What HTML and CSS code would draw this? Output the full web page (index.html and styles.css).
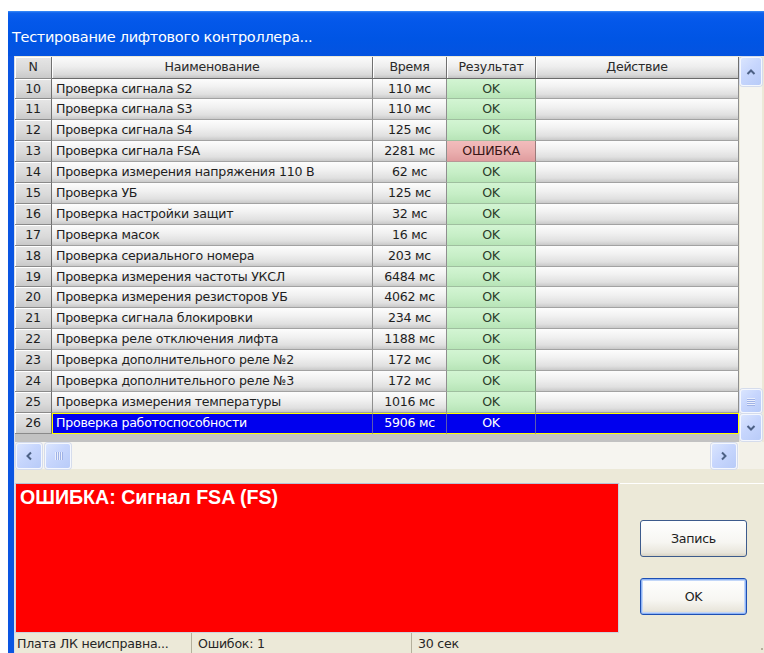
FILE: index.html
```html
<!DOCTYPE html>
<html lang="ru">
<head>
<meta charset="utf-8">
<title>Тестирование лифтового контроллера</title>
<link rel="stylesheet" href="styles.css">
</head>
<body>
<div class="window">
  <div class="caption">Тестирование лифтового контроллера...</div>
  <div class="client">
    <div class="grid-area">
      <div class="grid-top">
        <div class="cells">
          <div class="row head">
            <div class="c n">N</div>
            <div class="c">Наименование</div>
            <div class="c">Время</div>
            <div class="c">Результат</div>
            <div class="c">Действие</div>
          </div>
          <div class="row"><div class="c n">10</div><div class="c name">Проверка сигнала S2</div><div class="c time">110 мс</div><div class="c res ok">OK</div><div class="c act"></div></div>
          <div class="row"><div class="c n">11</div><div class="c name">Проверка сигнала S3</div><div class="c time">110 мс</div><div class="c res ok">OK</div><div class="c act"></div></div>
          <div class="row"><div class="c n">12</div><div class="c name">Проверка сигнала S4</div><div class="c time">125 мс</div><div class="c res ok">OK</div><div class="c act"></div></div>
          <div class="row"><div class="c n">13</div><div class="c name">Проверка сигнала FSA</div><div class="c time">2281 мс</div><div class="c res err">ОШИБКА</div><div class="c act"></div></div>
          <div class="row"><div class="c n">14</div><div class="c name">Проверка измерения напряжения 110 В</div><div class="c time">62 мс</div><div class="c res ok">OK</div><div class="c act"></div></div>
          <div class="row"><div class="c n">15</div><div class="c name">Проверка УБ</div><div class="c time">125 мс</div><div class="c res ok">OK</div><div class="c act"></div></div>
          <div class="row"><div class="c n">16</div><div class="c name">Проверка настройки защит</div><div class="c time">32 мс</div><div class="c res ok">OK</div><div class="c act"></div></div>
          <div class="row"><div class="c n">17</div><div class="c name">Проверка масок</div><div class="c time">16 мс</div><div class="c res ok">OK</div><div class="c act"></div></div>
          <div class="row"><div class="c n">18</div><div class="c name">Проверка сериального номера</div><div class="c time">203 мс</div><div class="c res ok">OK</div><div class="c act"></div></div>
          <div class="row"><div class="c n">19</div><div class="c name">Проверка измерения частоты УКСЛ</div><div class="c time">6484 мс</div><div class="c res ok">OK</div><div class="c act"></div></div>
          <div class="row"><div class="c n">20</div><div class="c name">Проверка измерения резисторов УБ</div><div class="c time">4062 мс</div><div class="c res ok">OK</div><div class="c act"></div></div>
          <div class="row"><div class="c n">21</div><div class="c name">Проверка сигнала блокировки</div><div class="c time">234 мс</div><div class="c res ok">OK</div><div class="c act"></div></div>
          <div class="row"><div class="c n">22</div><div class="c name">Проверка реле отключения лифта</div><div class="c time">1188 мс</div><div class="c res ok">OK</div><div class="c act"></div></div>
          <div class="row"><div class="c n">23</div><div class="c name">Проверка дополнительного реле №2</div><div class="c time">172 мс</div><div class="c res ok">OK</div><div class="c act"></div></div>
          <div class="row"><div class="c n">24</div><div class="c name">Проверка дополнительного реле №3</div><div class="c time">172 мс</div><div class="c res ok">OK</div><div class="c act"></div></div>
          <div class="row"><div class="c n">25</div><div class="c name">Проверка измерения температуры</div><div class="c time">1016 мс</div><div class="c res ok">OK</div><div class="c act"></div></div>
          <div class="row sel"><div class="c n">26</div><div class="c name">Проверка работоспособности</div><div class="c time">5906 мс</div><div class="c res ok">OK</div><div class="c act"></div></div>
        </div>
        <div class="vscroll">
          <div class="sbtn vbtn">
            <svg width="10" height="8" viewBox="0 0 10 8"><polyline points="1.5,6 5,2.5 8.5,6" fill="none" stroke="#4d6185" stroke-width="2"/></svg>
          </div>
          <div class="track"></div>
          <div class="sbtn vthumb">
            <svg width="8" height="9" viewBox="0 0 8 9"><path d="M0 1.5h8M0 3.5h8M0 5.5h8M0 7.5h8" stroke="#e9eefc" stroke-width="1"/><path d="M0 2.5h8M0 4.5h8M0 6.5h8M0 8.5h8" stroke="#9fb2e6" stroke-width="1"/></svg>
          </div>
          <div class="sbtn vbtn down">
            <svg width="10" height="8" viewBox="0 0 10 8"><polyline points="1.5,2 5,5.5 8.5,2" fill="none" stroke="#4d6185" stroke-width="2"/></svg>
          </div>
        </div>
      </div>
      <div class="hscroll">
        <div class="htrack">
          <div class="sbtn hbtn">
            <svg width="8" height="10" viewBox="0 0 8 10"><polyline points="6,1.5 2.5,5 6,8.5" fill="none" stroke="#4d6185" stroke-width="2"/></svg>
          </div>
          <div class="sbtn hthumb">
            <svg width="9" height="8" viewBox="0 0 9 8"><path d="M1.5 0v8M3.5 0v8M5.5 0v8M7.5 0v8" stroke="#e9eefc" stroke-width="1"/><path d="M2.5 0v8M4.5 0v8M6.5 0v8M8.5 0v8" stroke="#9fb2e6" stroke-width="1"/></svg>
          </div>
          <div class="hfill"></div>
          <div class="sbtn hbtn">
            <svg width="8" height="10" viewBox="0 0 8 10"><polyline points="2,1.5 5.5,5 2,8.5" fill="none" stroke="#4d6185" stroke-width="2"/></svg>
          </div>
        </div>
        <div class="corner"></div>
      </div>
    </div>
    <div class="bottom">
      <div class="msg">ОШИБКА: Сигнал FSA (FS)</div>
      <div class="side">
        <button class="btn">Запись</button>
        <button class="btn default">OK</button>
      </div>
    </div>
    <div class="status">
      <div class="panel p1">Плата ЛК неисправна...</div>
      <div class="panel p2">Ошибок: 1</div>
      <div class="panel p3">30 сек</div>
      <svg class="grip" width="12" height="12" viewBox="0 0 12 12">
        <g fill="#b5b09c"><rect x="9" y="1" width="2" height="2"/><rect x="6" y="4" width="2" height="2"/><rect x="9" y="4" width="2" height="2"/><rect x="3" y="7" width="2" height="2"/><rect x="6" y="7" width="2" height="2"/><rect x="9" y="7" width="2" height="2"/></g>
      </svg>
    </div>
  </div>
</div>
</body>
</html>
```
FILE: styles.css
```css
* { box-sizing: border-box; }

html, body {
  margin: 0;
  padding: 0;
}

body {
  width: 764px;
  height: 653px;
  overflow: hidden;
  background: #ffffff;
  font-family: "DejaVu Sans", Tahoma, sans-serif;
  font-size: 12.6px;
  letter-spacing: -0.25px;
  color: #1e1e1e;
}

/* XP-style window frame */
.window {
  margin: 11px 0 0 8px;
  width: 760px;
  height: 660px;
  background: #0a55e2;
  display: flex;
  flex-direction: column;
}

.caption {
  height: 45px;
  flex: none;
  padding: 17px 0 0 4px;
  line-height: 18px;
  font-size: 14.5px;
  letter-spacing: -0.3px;
  color: #ffffff;
  white-space: nowrap;
  background: linear-gradient(to bottom, #3d8ef8 0, #0d60ec 2px, #0458ea 10px, #0055e5 60%, #0453e0 100%);
}

.client {
  flex: 1;
  margin-left: 6px;
  padding: 1px 0 0 1px;
  background: #ece9d8;
  display: flex;
  flex-direction: column;
  box-shadow: inset 1px 0 #d8dde8;
}

/* data grid */
.grid-area {
  display: flex;
  flex-direction: column;
  flex: none;
}

.grid-top {
  display: flex;
  height: 385px;
}

.cells {
  width: 724px;
  background: #c2c2c2;
  overflow: hidden;
}

.row {
  display: grid;
  grid-template-columns: 37px 321px 74px 89px 203px;
  height: 20.9px;
  line-height: 19.9px;
}

.row.head {
  height: 21.5px;
  line-height: 20px;
}

.c {
  white-space: nowrap;
  overflow: hidden;
  text-align: center;
  border-right: 1px solid #8e8e8e;
  border-bottom: 1px solid #a2a2a2;
  background: linear-gradient(to bottom, #fdfdfd 0%, #f1f1f1 40%, #e0e0e0 80%, #c9c9c9 100%);
}

.head .c {
  border-right: 1px solid #6f6f6f;
  border-bottom: 1px solid #6a6a6a;
  background: linear-gradient(to bottom, #fbfbfb 0%, #eeeeee 45%, #d9d9d9 85%, #c2c2c2 100%);
  box-shadow: inset 1px 0 #ffffff;
  color: #2a2a2a;
}

.c.n {
  background: linear-gradient(to bottom, #e6e6e6 0%, #d9d9d9 60%, #c9c9c9 100%);
  border-right: 1px solid #707070;
  border-bottom: 1px solid #8a8a8a;
  box-shadow: inset 1px 1px #ffffff;
}

.c.name {
  text-align: left;
  padding-left: 4px;
}

.c.res.ok {
  background: linear-gradient(to bottom, #d3f5d3 0%, #c6eec6 55%, #b7e4b7 100%);
  border-right-color: #7c9a7c;
  border-bottom-color: #9fbf9f;
  color: #2b3d2b;
}

.c.res.err {
  background: linear-gradient(to bottom, #f2bcbc 0%, #eaaeae 55%, #e09c9e 100%);
  border-right-color: #9a7a7a;
  border-bottom-color: #b99696;
  color: #3a1616;
}

/* selected row with focus frame */
.row.sel .c:not(.n) {
  background: #0000ee;
  color: #ffffff;
  border-top: 1px solid #ffff00;
  border-bottom: 1px solid #ffff00;
  border-right: 1px solid #5b5bb0;
  line-height: 17.9px;
}

.row.sel .c.name { border-left: 1px solid #ffff00; padding-left: 3px; }
.row.sel .c.act { border-right: 1px solid #ffff00; }

/* scrollbars */
.sbtn {
  display: flex;
  align-items: center;
  justify-content: center;
  border: 1px solid #f4f7fe;
  border-radius: 3px;
  background: linear-gradient(135deg, #dae5fe 0%, #c7d6fd 45%, #b8cbf8 100%);
  box-shadow: 0 0 0 1px #d5dcec;
}

.vscroll {
  width: 22px;
  margin-left: 1px;
  display: flex;
  flex-direction: column;
  background: #f6f5f0;
  padding-bottom: 1px;
}

.vbtn { height: 29px; flex: none; }
.vbtn.down { height: 27px; margin-top: 1px; }
.track { flex: 1; }
.vthumb { height: 24px; flex: none; }

.hscroll {
  display: flex;
  height: 27px;
}

.htrack {
  width: 724px;
  display: flex;
  padding: 1px 2px 0 1px;
  background: #f6f5f0;
}

.hbtn { width: 26px; }
.hthumb { width: 26px; margin-left: 3px; }
.hfill { flex: 1; }

.corner {
  flex: 1;
  background: #f3f1e8;
}

/* message + buttons */
.bottom {
  margin-top: 14px;
  height: 150px;
  display: flex;
  flex: none;
}

.msg {
  width: 604px;
  background: #ff0000;
  border: 1px solid #cdd3de;
  border-top-color: #b8c2d6;
  padding: 2px 0 0 4px;
  font-family: "Liberation Sans", Arial, sans-serif;
  font-weight: bold;
  font-size: 19.6px;
  letter-spacing: 0;
  line-height: 22px;
  color: #ffffff;
}

.side {
  flex: 1;
  margin-left: 1px;
  border-top: 1px solid #ffffff;
  display: flex;
  flex-direction: column;
  align-items: flex-start;
  padding: 36px 0 0 20px;
  gap: 21px;
}

.btn {
  width: 107px;
  height: 37px;
  font-family: "DejaVu Sans", Tahoma, sans-serif;
  font-size: 12.6px;
  letter-spacing: -0.25px;
  color: #1e1e1e;
  border: 1px solid #3d5b8c;
  border-radius: 3px;
  background: linear-gradient(to bottom, #ffffff 0%, #f7f6f2 60%, #e9e6dc 90%, #d8d3c4 100%);
  padding: 0;
}

.btn.default {
  border-color: #1d4fb4;
  box-shadow: inset 0 0 0 1px #8fb4f4, inset 0 0 0 2px #c2d6f8;
}

/* status bar */
.status {
  height: 22px;
  display: flex;
  align-items: center;
  position: relative;
  line-height: 22px;
  color: #262626;
}

.panel {
  height: 100%;
  white-space: nowrap;
  padding-left: 2px;
}

.p1 { width: 177px; border-right: 1px solid #b4b09c; }
.p2 { width: 220px; padding-left: 6px; border-right: 1px solid #b4b09c; }
.p3 { padding-left: 6px; }

.grip {
  position: absolute;
  right: -2px;
  top: 8px;
}
```
